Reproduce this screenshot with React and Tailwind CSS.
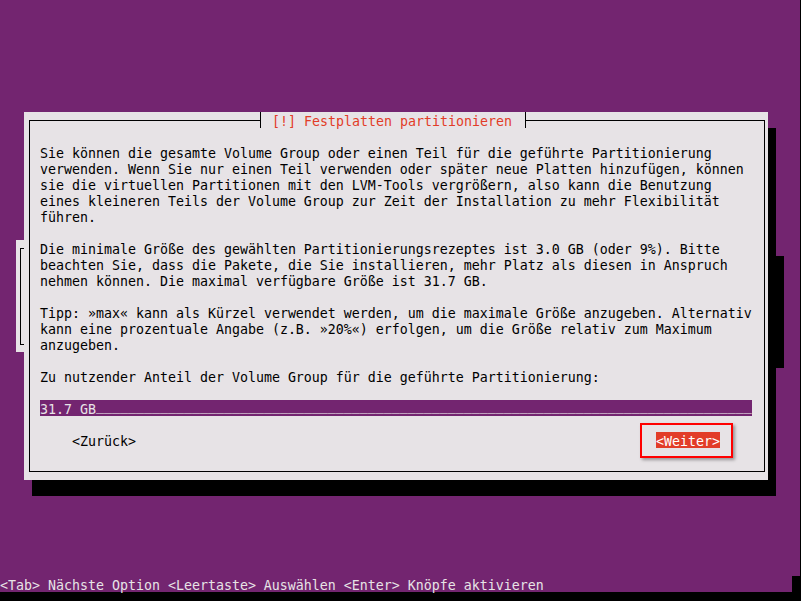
import React from "react";

const LIGHT = "bg-[#e7e3e6]";

const lines = [
  "Sie können die gesamte Volume Group oder einen Teil für die geführte Partitionierung",
  "verwenden. Wenn Sie nur einen Teil verwenden oder später neue Platten hinzufügen, können",
  "sie die virtuellen Partitionen mit den LVM-Tools vergrößern, also kann die Benutzung",
  "eines kleineren Teils der Volume Group zur Zeit der Installation zu mehr Flexibilität",
  "führen.",
  " ",
  "Die minimale Größe des gewählten Partitionierungsrezeptes ist 3.0 GB (oder 9%). Bitte",
  "beachten Sie, dass die Pakete, die Sie installieren, mehr Platz als diesen in Anspruch",
  "nehmen können. Die maximal verfügbare Größe ist 31.7 GB.",
  " ",
  "Tipp: »max« kann als Kürzel verwendet werden, um die maximale Größe anzugeben. Alternativ",
  "kann eine prozentuale Angabe (z.B. »20%«) erfolgen, um die Größe relativ zum Maximum",
  "anzugeben.",
  " ",
  "Zu nutzender Anteil der Volume Group für die geführte Partitionierung:",
  " ",
];

export default function App() {
  const underscores = "_".repeat(82);
  return (
    <div
      className="w-[801px] h-[601px] bg-black flex flex-col overflow-hidden text-[13.29px] leading-5"
      style={{ fontFamily: '"DejaVu Sans Mono", monospace' }}
    >
      <div className="relative w-[800px] h-[576px] bg-[#732570]">
        {/* background window */}
        <div className="absolute left-[24px] top-[256px] w-[760px] h-[112px] bg-black" />
        <div className={`absolute left-[16px] top-[240px] w-[760px] h-[112px] ${LIGHT}`}>
          <div className="absolute left-[4px] top-[8px] w-[740px] h-[97px] border border-black" />
        </div>

        {/* dialog shadow */}
        <div className="absolute left-[32px] top-[128px] w-[744px] h-[368px] bg-black" />

        {/* dialog */}
        <div className={`absolute left-[24px] top-[112px] w-[744px] h-[368px] ${LIGHT} pt-[8px] pr-[3px] pb-[8px] pl-[5px] flex`}>
          <div className="flex-1 border border-black pt-[23px] pl-[10px] flex flex-col text-black">
            <div className="whitespace-pre">
              {lines.map((l, i) => (
                <div key={i} className="h-4">{l}</div>
              ))}
            </div>
            <div className="w-[712px] h-4 bg-[#732570] text-[#e7e3e6] whitespace-pre flex items-start">
              <span className="h-4">{"31.7 GB"}</span>
              <span className="h-4 leading-[12px]">{underscores}</span>
            </div>
            <div className="h-4" />
            <div className="w-[712px] h-4 flex justify-between items-start whitespace-pre">
              <span className="ml-8 h-4">{"<Zurück>"}</span>
              <span className="mr-8 h-4 bg-[#e23c28] text-white">{"<Weiter>"}</span>
            </div>
          </div>

          {/* title */}
          <div className={`absolute left-[236px] top-0 w-[266px] h-4 ${LIGHT} border-l border-r border-black pl-[11px] text-[#e23c28] whitespace-pre`}>
            {"[!] Festplatten partitionieren"}
          </div>
        </div>

        {/* highlight annotation */}
        <div className="absolute left-[640px] top-[423px] w-[93px] h-[35px] border-2 border-[#ff0000] shadow-[2px_2px_3px_rgba(0,0,0,0.35)]" />
      </div>

      <div className="w-[792px] h-4 bg-[#732570] text-[#e7e3e6] whitespace-pre">
        {"<Tab> Nächste Option <Leertaste> Auswählen <Enter> Knöpfe aktivieren"}
      </div>
    </div>
  );
}
